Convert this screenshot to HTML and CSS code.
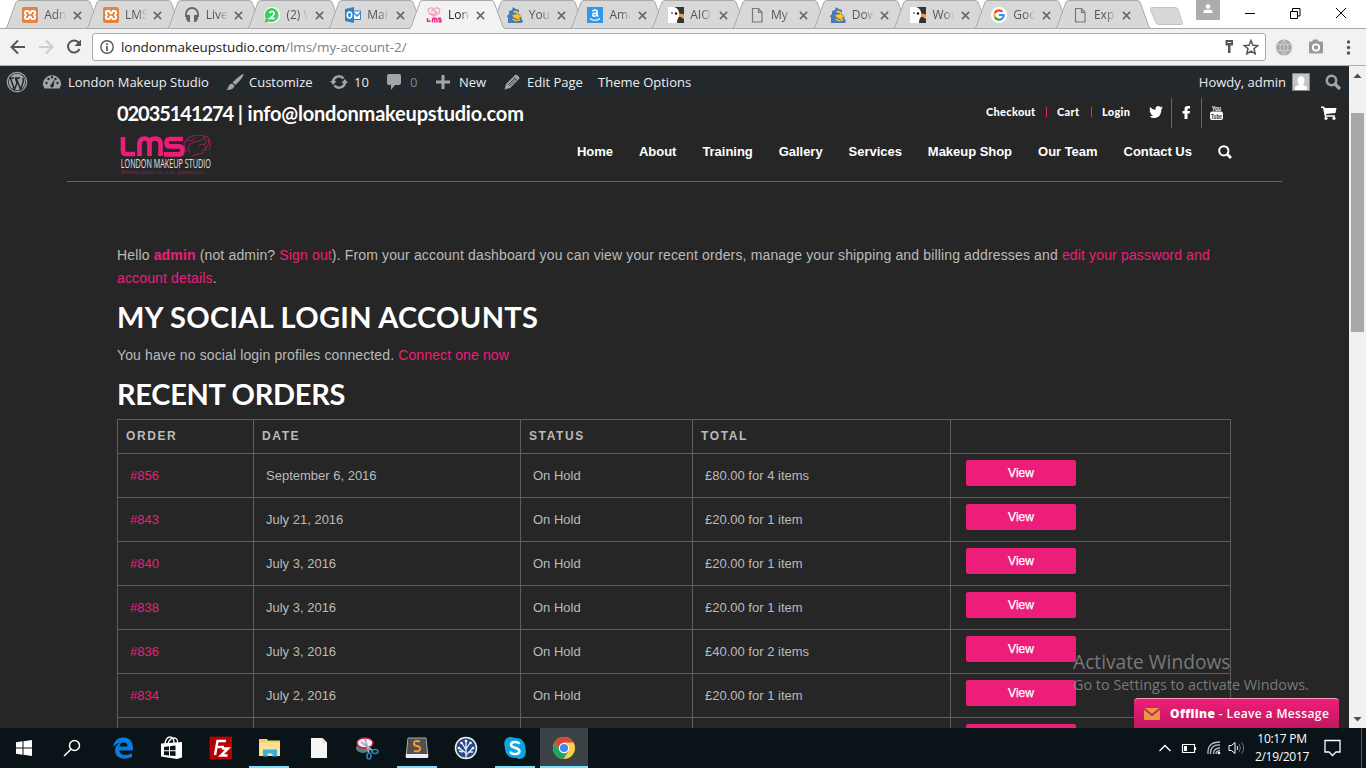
FILE: index.html
```html
<!DOCTYPE html>
<html lang="en">
<head>
<meta charset="utf-8">
<title>My Account - London Makeup Studio</title>
<link rel="stylesheet" href="styles.css">
</head>
<body>
<svg class="defs" width="0" height="0">
  <symbol id="tab" viewBox="0 0 96 29"><path d="M0 28.5L2 27 11 2Q12 .5 14 .5H82Q84 .5 85 2L94 27 96 28.5Z"/></symbol>
  <symbol id="close" viewBox="0 0 10 10"><path d="M1 1l8 8M9 1l-8 8" stroke="#666" stroke-width="1.7"/></symbol>
  <symbol id="xampp" viewBox="0 0 16 16"><rect width="16" height="16" rx="2" fill="#e8813f"/><path d="M4.5 4h1.7l1.3 2.2h1L9.800 4h1.700q1.500 0 1.500 1.500v1L12 8l1 1.500v1q0 1.500-1.500 1.500H9.800L8.500 9.800h-1L6.200 12H4.500Q3 12 3 10.500v-1L4 8 3 6.500v-1Q3 4 4.500 4z" fill="none" stroke="#fff" stroke-width="2"/></symbol>
  <symbol id="phones" viewBox="0 0 16 16"><path d="M2 10V7a6 6 0 0 1 12 0v3" fill="none" stroke="#666" stroke-width="1.800"/><path d="M2 8h4v7H4L2 12zM14 8h-4v7h2l2-3z" fill="#666"/></symbol>
  <symbol id="whats" viewBox="0 0 16 16"><circle cx="8" cy="8" r="8" fill="#fff"/><path d="M.5 15.500L1.700 11.500A6.900 6.900 0 1 1 5 14.400z" fill="#3ccf63"/><path d="M5.800 6.200Q6 4.500 8 4.500t2.200 1.800Q10.200 8 6 11.300h4.500" fill="none" stroke="#fff" stroke-width="1.700"/></symbol>
  <symbol id="outlook" viewBox="0 0 16 16"><path d="M8 4h7.500v8.500H8z" fill="#fff" stroke="#2b86d0"/><path d="M8 5l4 4 4-4" fill="none" stroke="#2b86d0" stroke-width="1.300"/><path d="M0 2l9-2v16l-9-2z" fill="#2b86d0"/><ellipse cx="4.500" cy="8" rx="2.200" ry="3" fill="none" stroke="#fff" stroke-width="1.600"/></symbol>
  <symbol id="lmsfav" viewBox="0 0 16 16"><path d="M8 9.500L3 6Q1 2 4 1 7 .4 8 2.500 9 .4 12 1q3 1 1 5zM5 4q2-2 3 0t3 0M5 6l3 2 3-3" fill="none" stroke="#f6a0c4" stroke-width="1.300"/><path d="M1.500 11v3.200h3M6.500 15.500V12q0-.8 1-.8 1.200 0 1.200 1v3.300V12q0-.8 1-.8 1.200 0 1.200 1v3.300M15 11.200h-2v1.700h2v1.900h-2.500" fill="none" stroke="#f0257f" stroke-width="1.400"/></symbol>
  <symbol id="gator" viewBox="0 0 16 16"><path d="M1 16V11L0 9l2-2V4l3-1 1-3 3 2 3 1v4l3 3-1 1 2 3-1 2z" fill="#4a78bd"/><path d="M6 4.500l3-1 3 2-1 2 4 2-3 1 1 3-4 1-4-2 2-2-2-2 3-1z" fill="#f5c736"/><path d="M7 6l3 1M6 11l5 2" stroke="#6a5a20"/></symbol>
  <symbol id="amazon" viewBox="0 0 16 16"><path d="M0 0h16v16H0z" fill="#3197e6"/><path d="M5.500 4.500Q6 3 8 3q2.200 0 2.200 2v3.500l1 1M10 6Q5.500 6 5.700 8q.3 1.500 2 1.300Q9.800 9 10 7" fill="none" stroke="#fff" stroke-width="1.500"/><path d="M3 11.500q5 3.500 10 0" fill="none" stroke="#fff" stroke-width="1.200"/></symbol>
  <symbol id="goose" viewBox="0 0 16 16"><path d="M0 0h16v16H0z" fill="#333"/><path d="M0 0h6Q10 1 11 5l1 4q-3 2-3 7H0z" fill="#fff"/><path d="M11 7q4-1 5 1v4l-5-3z" fill="#f0a040"/><circle cx="8" cy="6.500" r="1.200" fill="#111"/><path d="M3 6h2" stroke="#222"/></symbol>
  <symbol id="doc" viewBox="0 0 16 16"><path d="M3.500 1.500h6l3.500 4v9.500H3.500zM9.500 1.500v4H13" fill="none" stroke="#777" stroke-width="1.200"/></symbol>
  <symbol id="google" viewBox="0 0 16 16"><circle cx="8" cy="8" r="8" fill="#fff"/><g fill="none" stroke-width="2.200"><path d="M11.500 4.800A4.700 4.700 0 0 0 3.800 6" stroke="#ea4335"/><path d="M3.800 6a5 5 0 0 0 0 4" stroke="#fbbc05"/><path d="M3.800 10a4.700 4.700 0 0 0 7.300 1.600" stroke="#34a853"/><path d="M11.100 11.600Q13 10 12.700 8H8" stroke="#4285f4"/></g></symbol>
</svg>

<header class="tabs">
  <div class="tab"><svg class="shape"><use href="#tab"/></svg><svg class="fav"><use href="#xampp"/></svg><span>Adm</span><svg class="x"><use href="#close"/></svg></div>
  <div class="tab"><svg class="shape"><use href="#tab"/></svg><svg class="fav"><use href="#xampp"/></svg><span>LMS</span><svg class="x"><use href="#close"/></svg></div>
  <div class="tab"><svg class="shape"><use href="#tab"/></svg><svg class="fav"><use href="#phones"/></svg><span>Live</span><svg class="x"><use href="#close"/></svg></div>
  <div class="tab"><svg class="shape"><use href="#tab"/></svg><svg class="fav"><use href="#whats"/></svg><span>(2) W</span><svg class="x"><use href="#close"/></svg></div>
  <div class="tab"><svg class="shape"><use href="#tab"/></svg><svg class="fav"><use href="#outlook"/></svg><span>Mai</span><svg class="x"><use href="#close"/></svg></div>
  <div class="tab active"><svg class="shape"><use href="#tab"/></svg><svg class="fav"><use href="#lmsfav"/></svg><span>Lon</span><svg class="x"><use href="#close"/></svg></div>
  <div class="tab"><svg class="shape"><use href="#tab"/></svg><svg class="fav"><use href="#gator"/></svg><span>You</span><svg class="x"><use href="#close"/></svg></div>
  <div class="tab"><svg class="shape"><use href="#tab"/></svg><svg class="fav"><use href="#amazon"/></svg><span>Ama</span><svg class="x"><use href="#close"/></svg></div>
  <div class="tab"><svg class="shape"><use href="#tab"/></svg><svg class="fav"><use href="#goose"/></svg><span>AIO</span><svg class="x"><use href="#close"/></svg></div>
  <div class="tab"><svg class="shape"><use href="#tab"/></svg><svg class="fav"><use href="#doc"/></svg><span>My</span><svg class="x"><use href="#close"/></svg></div>
  <div class="tab"><svg class="shape"><use href="#tab"/></svg><svg class="fav"><use href="#gator"/></svg><span>Dow</span><svg class="x"><use href="#close"/></svg></div>
  <div class="tab"><svg class="shape"><use href="#tab"/></svg><svg class="fav"><use href="#goose"/></svg><span>Wor</span><svg class="x"><use href="#close"/></svg></div>
  <div class="tab"><svg class="shape"><use href="#tab"/></svg><svg class="fav"><use href="#google"/></svg><span>Goo</span><svg class="x"><use href="#close"/></svg></div>
  <div class="tab"><svg class="shape"><use href="#tab"/></svg><svg class="fav"><use href="#doc"/></svg><span>Exp</span><svg class="x"><use href="#close"/></svg></div>
  <svg class="newtab" width="36" height="19"><path d="M3 .5H26Q28 .5 29 2L33.500 16Q34 17.500 32 17.500H10Q8 17.500 7 16L1.500 3Q1 .5 3 .5z" fill="#d8d8d8" stroke="#c4c4c4"/></svg>
  <div class="window">
    <svg class="profile" width="24" height="20"><path d="M0 0h24v20H0z" fill="#adadad"/><circle cx="12" cy="6.500" r="2.300" fill="#fff"/><path d="M7.500 13V11.500q0-2 4.500-2t4.500 2V13z" fill="#fff"/></svg>
    <svg class="controls" width="146" height="28" fill="none" stroke="#000" stroke-width="1"><path d="M25 13.500h10M70.500 11.500h7v7h-7zM72.500 11v-2.500h7.500v7.500h-2.500"/><path d="M116 8l10 10M126 8l-10 10"/></svg>
  </div>
</header>

<div class="toolbar">
  <svg class="navicons" width="92" height="36" fill="none" stroke-width="2"><path d="M25 18H12M18 11.500L11.500 18l6.500 6.500" stroke="#555"/><path d="M39 18h13M46 11.500l6.500 6.500-6.500 6.500" stroke="#ccc"/><path d="M78.500 13.500A6 6 0 1 0 79.500 20" stroke="#555"/><path d="M81 10.500v6.500h-6.500z" fill="#555"/></svg>
  <div class="omnibox">
    <svg width="14" height="14" fill="none" stroke="#555"><circle cx="7" cy="7" r="6.200" stroke-width="1.400"/><path d="M7 6v5M7 3.200v1.700" stroke-width="1.700"/></svg>
    <span class="url">londonmakeupstudio.com<i>/lms/my-account-2/</i></span>
    <svg class="omni-right" width="36" height="16"><path d="M2.500 1h7.500v5.500H7.500V14h-2.500V6.500H2.500z" fill="#555"/><path d="M4.500 3.500h3.500" stroke="#fff"/><path d="M28 1.500l1.900 4.700 4.800.4-3.700 3.200 1.200 5-4.200-2.700-4.200 2.700 1.200-5-3.700-3.200 4.800-.4z" fill="none" stroke="#555" stroke-width="1.500"/></svg>
  </div>
  <svg class="ext" width="100" height="36"><circle cx="18" cy="18.500" r="8" fill="#aaa"/><path d="M10.500 15.500h15M10.500 21.500h15M18 11v15M18 11q-8 7.500 0 15M18 11q8 7.500 0 15" fill="none" stroke="#ccc"/><path d="M43 14q0-1.500 1.500-1.500H46l1.500-2h4l1.500 2h2.500q1.500 0 1.500 1.500v9q0 1.500-1.500 1.500h-11Q43 24.500 43 23z" fill="#999"/><circle cx="50" cy="18.500" r="3.200" fill="#999" stroke="#fff" stroke-width="1.800"/><g fill="#555"><circle cx="82.500" cy="13" r="1.700"/><circle cx="82.500" cy="18.500" r="1.700"/><circle cx="82.500" cy="24" r="1.700"/></g></svg>
</div>

<div class="viewport">
  <div class="page">
    <div class="adminbar">
      <svg class="wp" width="22" height="22" viewBox="0 0 22 22"><circle cx="11" cy="11" r="9.700" fill="none" stroke="#a0a5aa" stroke-width="1.300"/><circle cx="11" cy="11" r="8.200" fill="#a0a5aa"/><path d="M3.500 7H8M4.500 7.500l4 11L11 12 9.300 7M9 7h5M10.500 7.500l4 11 2.500-7q1-3-.5-4.500" fill="none" stroke="#23282d" stroke-width="1.500"/></svg>
      <svg class="dash" width="18" height="16" viewBox="0 0 18 16"><path d="M1.500 14.500A9 8.500 0 1 1 16.500 14.500Z" fill="#a0a5aa"/><g fill="#23282d"><circle cx="3.500" cy="9" r="1.200"/><circle cx="5.500" cy="5" r="1.200"/><circle cx="9" cy="3.300" r="1.200"/><circle cx="12.500" cy="5" r="1.200"/><circle cx="14.500" cy="9" r="1.200"/><path d="M11.500 5.500L10.700 12A1.700 1.700 0 1 1 8 10.500z"/></g></svg>
      <span class="i1">London Makeup Studio</span>
      <svg class="brush" width="18" height="17" viewBox="0 0 18 17"><path d="M17.500 0Q18 3 9.500 11L6.500 8.500Q15 0 17.500 0zM6 9.500l2.500 2.300Q8 16 0 16q2-1 2.500-3.500T6 9.500z" fill="#a0a5aa"/></svg>
      <span class="i2">Customize</span>
      <svg class="sync" width="18" height="14" viewBox="0 0 18 14" fill="#a0a5aa"><path d="M3 6.500A6 6 0 0 1 13.500 3.500M15 7.500A6 6 0 0 1 4.500 10.500" fill="none" stroke="#a0a5aa" stroke-width="2.500"/><path d="M0 6h6.500L3.200 10zM11.500 8H18l-3.200-4z"/></svg>
      <span class="i3">10</span>
      <svg class="bubble" width="14" height="16" viewBox="0 0 14 16"><path d="M2 0h10q2 0 2 2v7q0 2-2 2H8l-4 5v-5H2Q0 11 0 9V2Q0 0 2 0z" fill="#a0a5aa"/></svg>
      <span class="i4">0</span>
      <svg class="plus" width="14" height="14"><path d="M7 0v14M0 7h14" stroke="#a0a5aa" stroke-width="3"/></svg>
      <span class="i5">New</span>
      <svg class="pencil" width="16" height="16" viewBox="0 0 16 16"><path d="M11 1q1-1 2 0l2 2q1 1 0 2L6 14l-5.500 1.500L2 10z" fill="#a0a5aa"/><path d="M10 3.500l3 3M4 11l7-7M5.500 12l7-7" stroke="#23282d" stroke-width=".8"/></svg>
      <span class="i6">Edit Page</span>
      <span class="i7">Theme Options</span>
      <span class="howdy">Howdy, admin</span>
      <svg class="avatar" width="18" height="18"><path d="M.5.500h17v17H.5z" fill="#c4c4c4" stroke="#888"/><path d="M9 3a4 4 0 0 1 3.500 4.500Q12.500 10 11 11.500l4 2.500v3H3v-3l4-2.500Q5.500 10 5.500 7.500A4 4 0 0 1 9 3z" fill="#fff"/></svg>
      <svg class="find" width="17" height="17" fill="none" stroke="#a0a5aa"><circle cx="6.500" cy="6.500" r="4.700" stroke-width="2.500"/><path d="M10 10l5 5" stroke-width="3.200"/></svg>
    </div>
    <div class="site-header">
      <div class="topline">
        <div class="phone"><span class="digits">02035141274</span> | info@londonmakeupstudio.com</div>
        <nav class="minor"><a class="m1">Checkout</a><a class="m2">Cart</a><a class="m3">Login</a></nav>
        <div class="social">
          <svg width="30" height="30"><path d="M8.500 18.500Q11 18.500 12 17.300 10 17 9.500 15.500h1Q8.500 14.500 8.500 12.300l1.200.4Q8 11 9 9q2.500 2.800 5.500 3Q14 8.500 17 8q1.500 0 2.300 1l2-.8-1 1.700L22 9.500l-1.600 1.700Q20.500 18 15 19.800q-3.500 1-6.500-1.300z" fill="#fff"/></svg>
          <svg width="30" height="30"><path d="M18 8v2.500H16.500q-1 0-1 1V13H18l-.4 2.600H15.500V21h-3v-5.400h-2V13h2v-2q0-3 3-3z" fill="#fff"/></svg>
          <svg width="30" height="30" class="yt"><text x="14.500" y="12.500" text-anchor="middle" textLength="9" lengthAdjust="spacingAndGlyphs">You</text><rect x="8" y="13.500" width="13" height="8.500" rx="2" fill="#fff"/><text x="14.500" y="20.500" class="dark" text-anchor="middle" textLength="11" lengthAdjust="spacingAndGlyphs">Tube</text></svg>
        </div>
        <svg class="cart" width="16" height="14" viewBox="0 0 16 14"><path d="M0 .5h3l.7 1.500H15.500L14.500 7 5 8l.3 1.200H14v1.600H3.800L2 2H0z" fill="#fff"/><circle cx="5" cy="12.300" r="1.600" fill="#fff"/><circle cx="13" cy="12.300" r="1.600" fill="#fff"/></svg>
      </div>
      <div class="mainline">
        <svg class="logo" width="92" height="42" viewBox="0 0 92 42">
          <g fill="none" stroke="#ed1e79" stroke-width="4.600"><path d="M3 2v14q0 3 3 3h9M19.500 21V9q0-5.500 5-5.500t5 5.500v12M29.500 9q0-5.500 5.500-5.500t5.500 5.500v12M63 4H50q-3.500 0-3.500 3.700t3.500 3.700h9q3.500 0 3.500 4t-3.500 4H44"/></g>
          <path d="M67 17Q61 8 68 3T88 2q4 7 1 13M66 5q10 2 8-3M70 18q-5-7 4-11 10-2 10-5M84 2q4 4 0 8l2 4-3 1v3l-5 1-6 2M79 10l5-1M89 4q0 6-4 12" fill="none" stroke="#b91d61" stroke-width=".8"/>
          <text x=".8" y="33" class="name" textLength="90" lengthAdjust="spacingAndGlyphs">LONDON MAKEUP STUDIO</text>
          <text x="1" y="38.500" class="motto" textLength="88" lengthAdjust="spacingAndGlyphs">Perfection is our passion...</text>
        </svg>
        <nav class="major"><a>Home</a><a>About</a><a>Training</a><a>Gallery</a><a>Services</a><a>Makeup Shop</a><a>Our Team</a><a>Contact Us</a><svg width="14" height="14" fill="none" stroke="#fff"><circle cx="5.800" cy="5.800" r="4.600" stroke-width="2"/><path d="M9 9l4 4" stroke-width="2.600"/></svg></nav>
      </div>
    </div>
    <main>
      <p class="hello">Hello <b>admin</b> (not admin? <a>Sign out</a>). From your account dashboard you can view your recent orders, manage your shipping and billing addresses and <a>edit your password and<br>account details</a>.</p>
      <h2 class="h-social">My Social Login Accounts</h2>
      <p class="none">You have no social login profiles connected. <a>Connect one now</a></p>
      <h2 class="h-orders">Recent Orders</h2>
      <table>
        <colgroup><col class="c1"><col class="c2"><col class="c3"><col class="c4"><col class="c5"></colgroup>
        <tr><th>Order</th><th>Date</th><th>Status</th><th>Total</th><th></th></tr>
        <tr><td><a>#856</a></td><td>September 6, 2016</td><td>On Hold</td><td>£80.00 for 4 items</td><td><a class="btn">View</a></td></tr>
        <tr><td><a>#843</a></td><td>July 21, 2016</td><td>On Hold</td><td>£20.00 for 1 item</td><td><a class="btn">View</a></td></tr>
        <tr><td><a>#840</a></td><td>July 3, 2016</td><td>On Hold</td><td>£20.00 for 1 item</td><td><a class="btn">View</a></td></tr>
        <tr><td><a>#838</a></td><td>July 3, 2016</td><td>On Hold</td><td>£20.00 for 1 item</td><td><a class="btn">View</a></td></tr>
        <tr><td><a>#836</a></td><td>July 3, 2016</td><td>On Hold</td><td>£40.00 for 2 items</td><td><a class="btn">View</a></td></tr>
        <tr><td><a>#834</a></td><td>July 2, 2016</td><td>On Hold</td><td>£20.00 for 1 item</td><td><a class="btn">View</a></td></tr>
        <tr><td></td><td></td><td></td><td></td><td><a class="btn"></a></td></tr>
      </table>
    </main>
    <div class="watermark"><div class="w1">Activate Windows</div><div class="w2">Go to Settings to activate Windows.</div></div>
    <div class="chat"><svg width="16" height="12"><path d="M1.500 0h13q1.500 0 1.500 1.500v9q0 1.500-1.500 1.500h-13Q0 12 0 10.500v-9Q0 0 1.500 0z" fill="#e99a42"/><path d="M0 .5l8 6.500 8-6.500" fill="none" stroke="#d81c6e" stroke-width="1.800"/></svg><span><b>Offline</b> - Leave a Message</span></div>
  </div>
  <div class="scrollbar"><svg width="17" height="47"><path d="M4.500 12l4-4.500 4 4.500z" fill="#505050"/></svg><div class="thumb"></div><svg class="down" width="17" height="17"><path d="M4.500 6l4 4.500 4-4.500z" fill="#505050"/></svg></div>
</div>

<footer class="taskbar">
  <div class="apps">
    <div class="app"><svg viewBox="0 0 24 24"><path d="M4 6.300l6.500-1v6.200H4zM11.500 5.200L20 4v7.500h-8.500zM4 12.500h6.500v6.200l-6.500-1zM11.500 12.500H20V20l-8.500-1.200z" fill="#fff"/></svg></div>
    <div class="app"><svg viewBox="0 0 24 24" fill="none" stroke="#fff" stroke-width="1.500"><circle cx="13.500" cy="9.500" r="5"/><path d="M10 13.200L3 20"/></svg></div>
    <div class="app"><svg viewBox="-1 0 24 24"><path d="M2 11Q3.500 1.500 12 1.500 22 1.500 22 13v1.500H8.500q.5 4.500 6 4.500 3.500 0 6.500-1.800V21q-3.500 1.800-8 1.800-9-.8-9-8.300 0-5 5-8-4 1-7 4.500zM8.500 10.500h8q0-4-4-4-3.500 0-4 4z" fill="#0a7bdc"/></svg></div>
    <div class="app"><svg viewBox="-1 0 24 24"><path d="M1 7.500l21-1.500v15.500l-5 1.500L1 20.500z" fill="#fff"/><path d="M5 8Q6 1 10 1t4 6M8 7.500Q10 2 14 2t3.500 5" fill="none" stroke="#fff" stroke-width="1.300"/><path d="M4 11l5-.7v4H4zM10 10.200l5.500-.7v4.800H10zM4 15.300h5v4.200L4 19zM10 15.300h5.500V20L10 19.500z" fill="#0a1216"/></svg></div>
    <div class="app"><svg viewBox="-1 0 24 24"><path d="M1 1h22v22H1z" fill="#b40000" stroke="#d40000" stroke-dasharray="2 1"/><path d="M6 19L8.500 5H17M8 11h7M13 12.500h6L12 19.500h6.500" fill="none" stroke="#fff" stroke-width="2.500"/></svg></div>
    <div class="app run"><svg viewBox="-1 0 24 24"><path d="M1 3h8l1 1.500h12V20H1z" fill="#f2cf67"/><path d="M1.500 6.500H22V20H1.500z" fill="#fce292"/><path d="M5 20.500v-7h14v7h-4.500v-3h-5v3z" fill="#35aee2"/></svg></div>
    <div class="app"><svg viewBox="0 0 24 24"><path d="M4 2h11.500L20 6.500V22H4z" fill="#f5f5f5"/><path d="M15.500 2v4.500H20" fill="#ddd"/></svg></div>
    <div class="app"><svg viewBox="0 0 24 24"><ellipse cx="7" cy="12" rx="7" ry="5" fill="#667780"/><ellipse cx="9" cy="7" rx="8" ry="5" fill="#eef" stroke="#c22036" stroke-width="1.500"/><path d="M5 6l12 9M9 3l4 14" stroke="#aab" stroke-width="1.800"/><g fill="none" stroke="#2586c8" stroke-width="1.600"><ellipse cx="19" cy="15.500" rx="3" ry="2"/><ellipse cx="13" cy="20" rx="2" ry="3"/></g></svg></div>
    <div class="app run"><svg viewBox="0 0 24 24"><path d="M3 2h18l2 19H1z" fill="#555" stroke="#aaa"/><path d="M1 18h22v4H1z" fill="#eee"/><path d="M3 3h18v15H3z" fill="#505050"/><path d="M15 5.500Q9 4 9 7t3 3 3 3-6 2" fill="none" stroke="#f79a32" stroke-width="2"/></svg></div>
    <div class="app"><svg viewBox="0 0 24 24"><circle cx="12" cy="12" r="10.500" fill="#284b87" stroke="#eee" stroke-width="1.500"/><path d="M12 22V6M12 17L5 12M12 19l7-7M12 14L8 7M12 13l4-6M5 15l4 1M15 16h4" stroke="#e8eef6" stroke-width="1.300" fill="none"/><g fill="#fff"><circle cx="12" cy="5" r="1.300"/><circle cx="7.500" cy="7" r="1.300"/><circle cx="16.500" cy="7" r="1.300"/><circle cx="5" cy="12" r="1.300"/><circle cx="19" cy="12" r="1.300"/></g></svg></div>
    <div class="app run"><svg viewBox="0 0 24 24"><path d="M7 1q3 0 4 .8Q22 1.500 22.500 13 24 20 19 22.500q-3 1-5.500-.5Q2 22.500 1.800 11-.5 2.500 7 1z" fill="#0aa5e4"/><path d="M16.500 8Q15.500 6 12 6 8 6 8 8.800q0 2 4 3t4.500 3.200q0 3-4.500 3t-4.500-2.500" fill="none" stroke="#fff" stroke-width="2.500"/></svg></div>
    <div class="app run current"><svg viewBox="0 0 24 24"><circle cx="12" cy="12" r="11" fill="#fcd04b"/><path d="M2.500 6.500A11 11 0 0 0 11.500 23L16.500 15 12 12 7 14z" fill="#1fa463"/><path d="M2.500 6.500l5 8.500 2 2L12 12z" fill="#1fa463"/><path d="M2.500 6.500A11 11 0 0 1 21.500 6.500H12l-5.500 5z" fill="#db4437"/><circle cx="12" cy="12" r="5.200" fill="#fff"/><circle cx="12" cy="12" r="4.100" fill="#4285f4"/></svg></div>
  </div>
  <svg class="tray" width="92" height="24" fill="none" stroke="#fff"><path d="M5.500 15l5.500-5.500L16.500 15" stroke-width="1.400"/><path d="M28.500 8.500h12v8h-12zM41.500 11v3" stroke-width="1.200"/><path d="M30 10h3v5h-3z" fill="#fff" stroke="none"/><g stroke-width="1.300"><path d="M54 18Q53 6 66 6M56.500 18Q56 8.500 66 9M59.500 18q0-6 6.500-6M62 18q0-3 4-3.500" stroke="#bbb"/></g><circle cx="65" cy="17" r="1.300" fill="#fff" stroke="none"/><path d="M75 9.500h2.500L81 6.500v11l-3.500-3H75z"/><path d="M83 10q1.500 2 0 4"/><path d="M85 8q3 4 0 8M87.500 6.500q4.500 5.500 0 11" stroke="#777"/></svg>
  <div class="clock"><div>10:17 PM</div><div>2/19/2017</div></div>
  <svg class="notif" width="17" height="18"><path d="M1 1.500h15v11.500h-4l-3.500 3.500L5 13H1z" fill="none" stroke="#fff" stroke-width="1.300"/></svg>
  <div class="peek"></div>
</footer>
</body>
</html>
```
FILE: styles.css
```css
* { box-sizing: border-box; }
body { margin: 0; width: 1366px; height: 768px; overflow: hidden; display: flex; flex-direction: column; font-family: "Liberation Sans", Arial, sans-serif; background: #fff; }
svg { display: block; flex: none; }
.defs { position: absolute; }

/* browser tabs */
.tabs { height: 29px; flex: none; display: flex; padding-left: 5px; background: linear-gradient(#a8a8a8, #a8a8a8) bottom / 100% 1px no-repeat #fff; font-family: "Open Sans", sans-serif; }
.tab { position: relative; width: 96px; margin-right: -15.25px; height: 29px; flex: none; display: flex; align-items: center; padding: 1px 0 0 17px; }
.shape { position: absolute; left: 0; top: 0; width: 96px; height: 29px; fill: #d8d8d8; stroke: #aaa; }
.tab.active { z-index: 2; }
.active .shape { fill: #f2f2f2; }
.tab.active::after { content: ""; position: absolute; left: 1px; right: 1px; bottom: 0; height: 1px; background: #f2f2f2; }
.fav { position: relative; width: 16px; height: 16px; }
.tab span { position: relative; width: 22px; margin-left: 6.2px; font-size: 12px; line-height: 16px; overflow: hidden; white-space: nowrap; color: #555; -webkit-mask-image: linear-gradient(90deg, #000 55%, transparent); mask-image: linear-gradient(90deg, #000 55%, transparent); }
.tab.active span { color: #222; }
.x { position: relative; width: 9px; height: 9px; margin-left: 6.4px; }
.newtab { margin: 7px 0 0 13px; }
.window { display: flex; margin-left: auto; }

/* address bar */
.toolbar { height: 37px; flex: none; display: flex; background: #f2f2f2; border-bottom: 1px solid #b0b0b0; }
.omnibox { width: 1174px; height: 28px; margin-top: 4px; border: 1px solid #a9a9a9; border-radius: 3px; background: #fff; display: flex; align-items: center; padding: 0 6px 0 7px; }
.url { margin-left: 7px; font: 13.5px/20px "Open Sans", sans-serif; letter-spacing: -.07px; color: #222; }
.url i { font-style: normal; color: #808080; }
.omni-right { margin-left: auto; }

.viewport { height: 662px; flex: none; display: flex; }
.page { position: relative; width: 1349px; background: #262626; overflow: hidden; }
.adminbar { height: 32px; background: #23282d; display: flex; align-items: center; font: 13px/32px "Open Sans", sans-serif; color: #eee; white-space: nowrap; padding-left: 6px; }
.dash { margin-left: 15px; }
.i1 { width: 158px; margin-left: 7px; }
.i2 { width: 81px; margin-left: 5px; }
.i3 { width: 33px; margin-left: 6px; }
.i4 { width: 26px; margin-left: 9px; color: #82878c; }
.i5 { width: 45px; margin-left: 9px; }
.i6 { width: 71px; margin-left: 7px; }
.howdy { margin-left: auto; }
.avatar { margin-left: 6px; }
.find { margin: 0 7px 0 15px; }

.site-header { width: 1215px; margin-left: 67px; height: 84px; border-bottom: 1px solid #666; color: #fff; }
.topline { display: flex; height: 30px; }
.phone { flex: none; width: 869px; padding-left: 50px; font: 700 20px/30px Lato, sans-serif; letter-spacing: -.2px; white-space: nowrap; }
.digits { letter-spacing: -1.04px; }
.minor { flex: none; width: 207px; display: flex; align-items: center; font: 900 11px/10px Lato, sans-serif; letter-spacing: .3px; padding: 0 0 2px 50px; }
.minor a + a { border-left: 1px solid #ed1e79; padding-left: 10px; }
.m1 { width: 60px; }
.m2 { width: 45px; }
.social { display: flex; flex: none; margin-left: -2px; }
.social svg + svg { border-left: 1px solid #ed1e79; }
.yt text { font: 700 7px "Liberation Sans", sans-serif; fill: #fff; }
.yt .dark { fill: #333; }
.cart { margin: 8px -55px 0 auto; }
.mainline { display: flex; align-items: flex-start; padding-left: 53px; }
.logo { margin-top: 7px; }
.name { font: 13px "Open Sans", sans-serif; fill: #e4e4e4; }
.motto { font: 5px "DejaVu Sans", sans-serif; fill: #a01c58; }
.major { display: flex; margin: 15px 0 0 365px; font-weight: 700; font-size: 13px; line-height: 18px; gap: 26px; letter-spacing: -.03px; align-items: center; white-space: nowrap; }

main { padding: 62px 0 0 117px; color: #bbb; }
main a, .hello b { color: #ed1e79; }
main p { margin: 0; font-size: 14px; line-height: 23px; white-space: nowrap; }
.hello { letter-spacing: .148px; }
h2 { margin: 0; color: #fff; font: 700 29px/38px Lato, sans-serif; text-transform: uppercase; white-space: nowrap; }
.h-social { margin-top: 8px; letter-spacing: .3px; }
.none { padding-top: 8px; letter-spacing: .12px; }
.h-orders { margin-top: 8px; letter-spacing: -.3px; }
table { margin-top: 6px; width: 1114px; table-layout: fixed; border-collapse: collapse; }
.c1 { width: 136px; } .c2 { width: 267px; } .c3 { width: 172px; } .c4 { width: 258px; } .c5 { width: 280px; }
th, td { border: 1px solid #5e5e5e; padding: 0; text-align: left; }
th { height: 34px; padding: 0 0 2px 8px; font-size: 12px; letter-spacing: 1.6px; text-transform: uppercase; }
td { height: 44px; padding-left: 12px; font-size: 13px; }
.btn { display: block; width: 110px; height: 26px; margin: -5px 0 0 3px; border-radius: 2px; background: #ed1e79; font-size: 12px; line-height: 26px; text-align: center; }
td .btn { color: #fff; -webkit-text-stroke: .25px #fff; }

.chat { position: absolute; left: 1134px; top: 632px; width: 205px; height: 30px; border-radius: 4px 4px 0 0; border-top: 1px solid #f79ac2; background: linear-gradient(#ed1e79, #c0185f); color: #fff; display: flex; align-items: center; padding-left: 10px; white-space: nowrap; }
.chat span { margin-left: 10px; font: 600 12px/20px "Open Sans", sans-serif; letter-spacing: .37px; }
.watermark { position: absolute; left: 1073px; top: 584px; color: rgba(150, 150, 150, .75); font-family: "Open Sans", sans-serif; white-space: nowrap; }
.w1 { font-size: 19.2px; line-height: 24px; }
.w2 { font-size: 14.4px; line-height: 22px; }

.scrollbar { width: 17px; background: #f1f1f1; display: flex; flex-direction: column; align-items: center; }
.thumb { width: 13px; height: 219px; background: #a8a8a8; }
.down { margin-top: auto; }

/* taskbar */
.taskbar { height: 40px; flex: none; display: flex; background: #0a1318; align-items: center; color: #fff; }
.apps { display: flex; gap: 1.1px; }
.app { width: 48px; height: 40px; display: flex; align-items: center; justify-content: center; position: relative; }
.app svg { width: 24px; height: 24px; }
.run::after { content: ""; position: absolute; left: 4px; right: 4px; bottom: 0; height: 2px; background: #76dffa; }
.current { background: #3c4245; }
.current::after { left: 0; right: 0; }
.tray { margin-left: auto; }
.clock { width: 64px; margin-left: 4px; text-align: center; font: 12px/18px "Open Sans", sans-serif; letter-spacing: -.3px; }
.notif { margin-left: 10px; }
.peek { width: 1px; height: 40px; background: #555; margin: 0 4px 0 20px; }
```
